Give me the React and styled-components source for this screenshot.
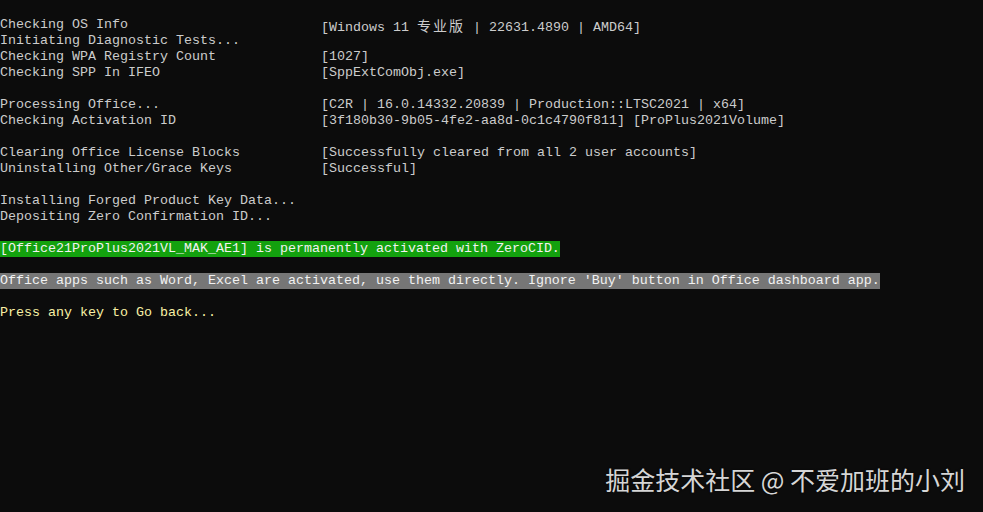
import React from 'react';
import styled, { createGlobalStyle } from 'styled-components';

const GlobalStyle = createGlobalStyle`
    html, body {
        margin: 0;
        padding: 0;
        background: #0c0c0c;
    }
`;

/* 터미널 창 */
const Terminal = styled.div`
    position: relative;
    width: 983px;
    height: 512px;
    overflow: hidden;
    background: #0c0c0c;
    color: #cccccc;
    font-family: "Liberation Mono", "DejaVu Sans Mono", monospace;
    font-size: 13.33px;
    line-height: 16px;
    padding-top: 17px;
    box-sizing: border-box;
`;

const Row = styled.div`
    display: flex;
    height: 16px;
    white-space: pre;
`;

const Label = styled.span`
    width: 321px;
    flex-shrink: 0;
`;

const Value = styled.span`
    white-space: pre;
`;

/* 한 줄 전체 강조 (초록/회색) */
const Highlight = styled.span`
    background: ${props => props.bg};
    color: #f2f2f2;
    white-space: pre;
`;

const Prompt = styled.span`
    color: #f9f1a5;
`;

/* 중국어 글자는 2칸 */
const Wide = styled.span`
    font-family: "Noto Sans CJK SC", sans-serif;
    font-size: 14px;
    letter-spacing: 2px;
`;

const Watermark = styled.div`
    position: absolute;
    right: 18px;
    bottom: 16px;
    font-family: "Noto Sans CJK SC", "Noto Sans", sans-serif;
    font-size: 25px;
    line-height: 34px;
    color: #d6d6d6;
    text-shadow: 0 0 2px rgba(0, 0, 0, 0.6);
`;

const lines = [
    ['Checking OS Info', <>[Windows 11 <Wide>专业版</Wide> | 22631.4890 | AMD64]</>],
    ['Initiating Diagnostic Tests...', ''],
    ['Checking WPA Registry Count', '[1027]'],
    ['Checking SPP In IFEO', '[SppExtComObj.exe]'],
    null,
    ['Processing Office...', '[C2R | 16.0.14332.20839 | Production::LTSC2021 | x64]'],
    ['Checking Activation ID', '[3f180b30-9b05-4fe2-aa8d-0c1c4790f811] [ProPlus2021Volume]'],
    null,
    ['Clearing Office License Blocks', '[Successfully cleared from all 2 user accounts]'],
    ['Uninstalling Other/Grace Keys', '[Successful]'],
    null,
    ['Installing Forged Product Key Data...', ''],
    ['Depositing Zero Confirmation ID...', ''],
];

const App = () => {
    return (
        <>
            <GlobalStyle />
            <Terminal>
                {lines.map((line, i) =>
                    line ? (
                        <Row key={i}>
                            <Label>{line[0]}</Label>
                            <Value>{line[1]}</Value>
                        </Row>
                    ) : (
                        <Row key={i}> </Row>
                    )
                )}
                <Row> </Row>
                <Row>
                    <Highlight bg="#13a10e">[Office21ProPlus2021VL_MAK_AE1] is permanently activated with ZeroCID.</Highlight>
                </Row>
                <Row> </Row>
                <Row>
                    <Highlight bg="#767676">Office apps such as Word, Excel are activated, use them directly. Ignore 'Buy' button in Office dashboard app.</Highlight>
                </Row>
                <Row> </Row>
                <Row>
                    <Prompt>Press any key to Go back...</Prompt>
                </Row>
                <Watermark>掘金技术社区 @ 不爱加班的小刘</Watermark>
            </Terminal>
        </>
    );
};

export default App;
